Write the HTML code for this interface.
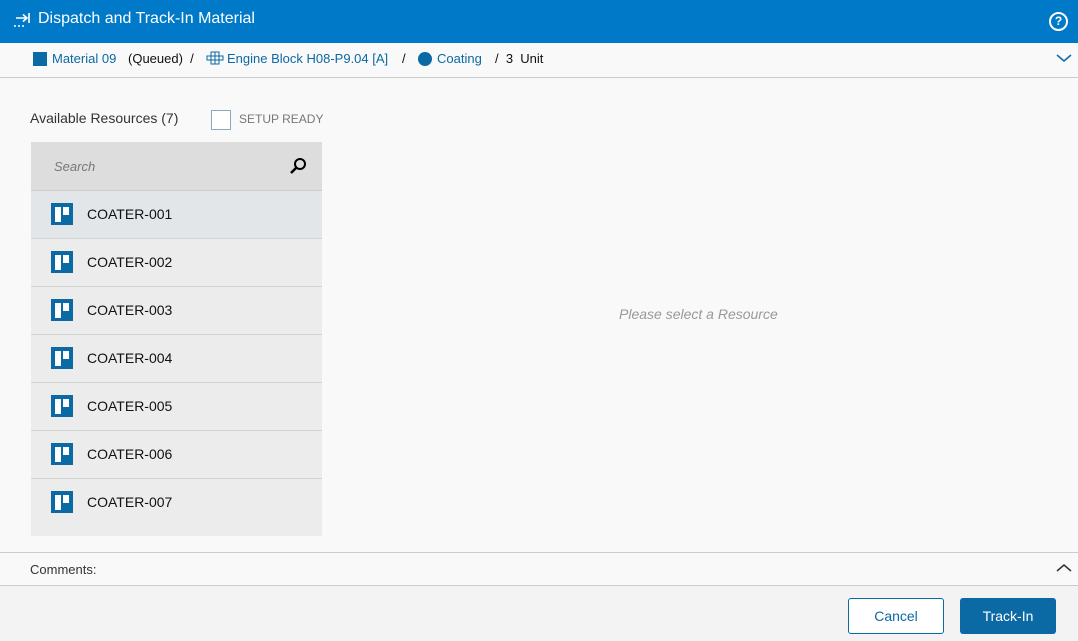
<!DOCTYPE html><html><head><style>
body{margin:0;width:1078px;height:641px;background:#f9f9f9;font-family:"Liberation Sans",sans-serif;position:relative;overflow:hidden}
.a{position:absolute}
.hdr{left:0;top:0;width:1078px;height:43px;background:#0079c8;color:#fff}
.row{left:31px;width:291px;height:47px;background:#ececec;border-bottom:1px solid #d4d4d4;font-size:14px;color:#111}
.ic{position:absolute;left:20px;top:12px;width:22px;height:22px;background:#0b69a3}
.ic:before{content:"";position:absolute;left:4px;top:4px;width:6px;height:15px;background:#fff}
.ic:after{content:"";position:absolute;left:12px;top:4px;width:6px;height:8px;background:#fff}
.row span{position:absolute;left:56px;top:15px}
</style></head><body>
<div class="a hdr">
<svg class="a" style="left:13px;top:12px" width="20" height="16"><path d="M3 6h11M10 2.5l4 3.5-4 3.5M16 1v10" stroke="#fff" stroke-width="1.6" fill="none"/><path d="M1 14h2M5 14h2M9 14h2" stroke="#fff" stroke-width="1.6"/></svg>
<span class="a" style="left:38px;top:10px;font-size:16px">Dispatch and Track-In Material</span>
<div class="a" style="left:1049px;top:12px;width:15px;height:15px;border:2px solid #fff;border-radius:50%;font-size:12px;font-weight:bold;text-align:center;line-height:15px">?</div></div>
<div class="a" style="left:0;top:43px;width:1078px;height:34px;border-bottom:1px solid #ccc;font-size:13px;color:#111">
<div class="a" style="left:33px;top:9px;width:14px;height:14px;background:#0b69a3"></div>
<span class="a" style="left:52px;top:8px;color:#0b69a3">Material 09</span><span class="a" style="left:128px;top:8px">(Queued) &nbsp;/</span>
<svg class="a" style="left:206px;top:8px" width="18" height="14"><path d="M1 5h16v4H1zM5 1h4v12H5zM9 1h4v12H9z" stroke="#0b69a3" stroke-width="1" fill="none"/></svg>
<span class="a" style="left:227px;top:8px;color:#0b69a3">Engine Block H08-P9.04 [A]</span><span class="a" style="left:402px;top:8px">/</span>
<div class="a" style="left:418px;top:9px;width:14px;height:14px;border-radius:50%;background:#0b69a3"></div>
<span class="a" style="left:437px;top:8px;color:#0b69a3">Coating</span><span class="a" style="left:495px;top:8px">/ &nbsp;3 &nbsp;Unit</span>
<svg class="a" style="left:1056px;top:10px" width="16" height="10"><path d="M1 2l7 6 7-6" stroke="#0b69a3" stroke-width="1.5" fill="none"/></svg></div>
<span class="a" style="left:30px;top:110px;font-size:14px;color:#333">Available Resources (7)</span>
<div class="a" style="left:211px;top:110px;width:18px;height:18px;border:1px solid #8ab;background:#fff"></div>
<span class="a" style="left:239px;top:112px;font-size:12px;color:#777">SETUP READY</span>
<div class="a" style="left:31px;top:142px;width:291px;height:48px;background:#ddd;border-bottom:1px solid #ccc"><span class="a" style="left:23px;top:17px;font-size:13px;font-style:italic;color:#777">Search</span>
<svg class="a" style="left:258px;top:15px" width="18" height="18"><circle cx="11" cy="7" r="5" stroke="#000" stroke-width="2" fill="none"/><path d="M7.5 10.5L2 16" stroke="#000" stroke-width="2.5"/></svg></div>
<div class="a row" style="top:191px;background:#e2e6e9"><i class="ic"></i><span>COATER-001</span></div>
<div class="a row" style="top:239px"><i class="ic"></i><span>COATER-002</span></div>
<div class="a row" style="top:287px"><i class="ic"></i><span>COATER-003</span></div>
<div class="a row" style="top:335px"><i class="ic"></i><span>COATER-004</span></div>
<div class="a row" style="top:383px"><i class="ic"></i><span>COATER-005</span></div>
<div class="a row" style="top:431px"><i class="ic"></i><span>COATER-006</span></div>
<div class="a row" style="top:479px;height:57px;border:none"><i class="ic"></i><span>COATER-007</span></div>
<span class="a" style="left:619px;top:306px;font-size:14px;font-style:italic;color:#999">Please select a Resource</span>
<div class="a" style="left:0;top:552px;width:1078px;height:32px;border-top:1px solid #ccc;border-bottom:1px solid #ccc"><span class="a" style="left:30px;top:9px;font-size:13px;color:#333">Comments:</span>
<svg class="a" style="left:1056px;top:10px" width="16" height="10"><path d="M1 8l7-6 7 6" stroke="#333" stroke-width="1.5" fill="none"/></svg></div>
<div class="a" style="left:0;top:586px;width:1078px;height:55px;background:#f3f3f3"></div>
<div class="a" style="left:848px;top:598px;width:94px;height:34px;border:1px solid #0b69a3;border-radius:3px;background:#fff;color:#0b69a3;font-size:14px;text-align:center;line-height:34px">Cancel</div>
<div class="a" style="left:960px;top:598px;width:96px;height:36px;border-radius:3px;background:#0b69a3;color:#fff;font-size:14px;text-align:center;line-height:36px">Track-In</div>
</body></html>
